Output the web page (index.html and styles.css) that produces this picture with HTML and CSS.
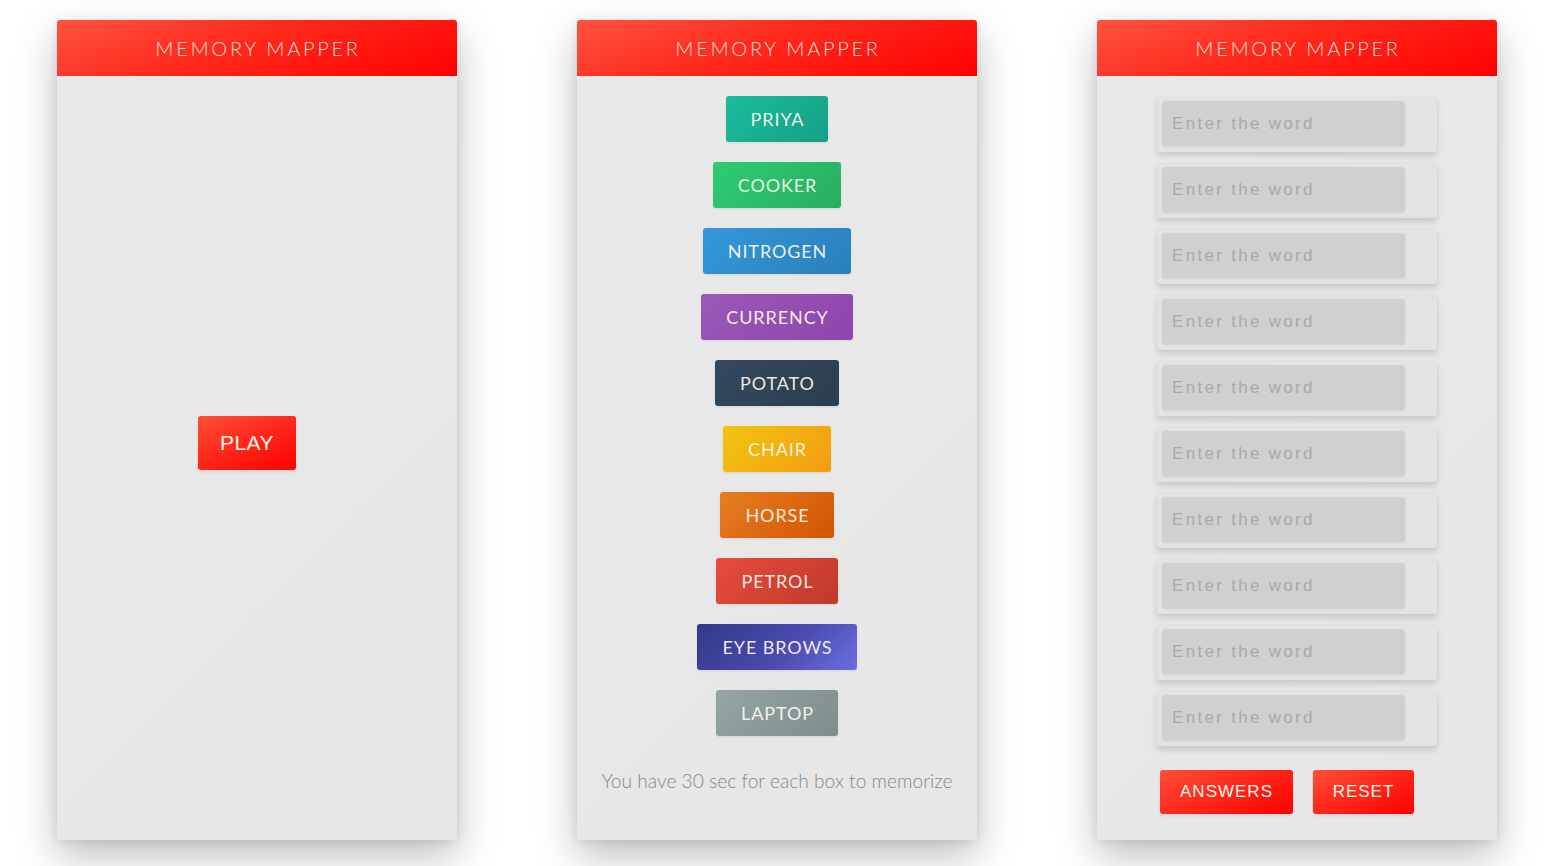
FILE: index.html
```html
<!DOCTYPE html>
<html lang="en">
<head>
<meta charset="utf-8">
<title>Memory Mapper</title>
<link rel="stylesheet" href="styles.css">
</head>
<body>
<main class="stage">
  <section class="panel">
    <header class="panel-head">MEMORY MAPPER</header>
    <div class="panel-body body-play">
      <button class="red-btn play-btn">PLAY</button>
    </div>
  </section>

  <section class="panel">
    <header class="panel-head">MEMORY MAPPER</header>
    <div class="panel-body body-words">
      <div class="word w-teal">PRIYA</div>
      <div class="word w-green">COOKER</div>
      <div class="word w-blue">NITROGEN</div>
      <div class="word w-purple">CURRENCY</div>
      <div class="word w-navy">POTATO</div>
      <div class="word w-yellow">CHAIR</div>
      <div class="word w-orange">HORSE</div>
      <div class="word w-red">PETROL</div>
      <div class="word w-indigo">EYE BROWS</div>
      <div class="word w-gray">LAPTOP</div>
      <p class="hint">You have 30 sec for each box to memorize</p>
    </div>
  </section>

  <section class="panel">
    <header class="panel-head">MEMORY MAPPER</header>
    <div class="panel-body body-inputs">
      <div class="inputs">
        <div class="field"><input type="text" placeholder="Enter the word"></div>
        <div class="field"><input type="text" placeholder="Enter the word"></div>
        <div class="field"><input type="text" placeholder="Enter the word"></div>
        <div class="field"><input type="text" placeholder="Enter the word"></div>
        <div class="field"><input type="text" placeholder="Enter the word"></div>
        <div class="field"><input type="text" placeholder="Enter the word"></div>
        <div class="field"><input type="text" placeholder="Enter the word"></div>
        <div class="field"><input type="text" placeholder="Enter the word"></div>
        <div class="field"><input type="text" placeholder="Enter the word"></div>
        <div class="field"><input type="text" placeholder="Enter the word"></div>
        <div class="actions">
          <button class="red-btn small-btn answers-btn">ANSWERS</button>
          <button class="red-btn small-btn reset-btn">RESET</button>
        </div>
      </div>
    </div>
  </section>
</main>
</body>
</html>
```

FILE: styles.css
```css
* { box-sizing: border-box; }

html, body {
  margin: 0;
  padding: 0;
  background: #ffffff;
  font-family: "Lato", "Liberation Sans", Arial, sans-serif;
}

.stage {
  display: flex;
  justify-content: center;
  gap: 120px;
  padding-top: 20px;
  height: 866px;
  padding-right: 2px;
}

.panel {
  width: 400px;
  height: 820px;
  display: flex;
  flex-direction: column;
  background: #e8e8e8;
  border-radius: 3px 3px 0 0;
  box-shadow: 0 16px 40px rgba(0, 0, 0, 0.26), 0 2px 8px rgba(0, 0, 0, 0.08);
}

.panel-head {
  height: 56px;
  flex: none;
  display: flex;
  align-items: center;
  justify-content: center;
  background: linear-gradient(160deg, #ff5340 0%, #ff2a1c 45%, #ff0000 100%);
  border-radius: 3px 3px 0 0;
  color: rgba(255, 244, 238, 0.92);
  font-family: "Lato", sans-serif;
  font-weight: 300;
  font-size: 20px;
  letter-spacing: 2.7px;
  padding-left: 2px;
}

.panel-body {
  flex: 1;
  display: flex;
  flex-direction: column;
  align-items: center;
  background: linear-gradient(135deg, #e9e9e9 0%, #e6e6e6 100%);
}

.body-play {
  justify-content: center;
  padding-bottom: 30px;
}

.red-btn {
  border: none;
  border-radius: 3px;
  background: linear-gradient(155deg, #ff5038 0%, #ff2a1c 45%, #ff0000 100%);
  color: #fff6ec;
  font-family: "Liberation Sans", Arial, sans-serif;
  cursor: pointer;
  box-shadow: 0 2px 3px rgba(0, 0, 0, 0.08);
}

.play-btn {
  width: 98px;
  height: 54px;
  font-size: 21px;
  letter-spacing: 0.5px;
  margin-right: 20px;
}

.body-words {
  padding-top: 20px;
}

.word {
  height: 46px;
  padding: 0 24px 0 25px;
  margin-bottom: 20px;
  display: flex;
  align-items: center;
  justify-content: center;
  border-radius: 3px;
  font-family: "Lato", sans-serif;
  font-size: 18px;
  letter-spacing: 0.9px;
  color: rgba(255, 250, 240, 0.93);
  box-shadow: 0 1px 2px rgba(0, 0, 0, 0.08);
}

.w-teal   { background: linear-gradient(135deg, #1abc9c, #16a085); }
.w-green  { background: linear-gradient(135deg, #2ecc71, #27ae60); }
.w-blue   { background: linear-gradient(135deg, #3498db, #2980b9); }
.w-purple { background: linear-gradient(135deg, #9b59b6, #8e44ad); }
.w-navy   { background: linear-gradient(135deg, #34495e, #2c3e50); }
.w-yellow { background: linear-gradient(135deg, #f1c40f, #f39c12); }
.w-orange { background: linear-gradient(135deg, #e67e22, #d35400); }
.w-red    { background: linear-gradient(135deg, #e74c3c, #c0392b); }
.w-indigo { background: linear-gradient(135deg, #323a86, #4a4ab0 55%, #6a6fe0); }
.w-gray   { background: linear-gradient(135deg, #95a5a6, #7f8c8d); }

.hint {
  margin: 13px 0 0;
  font-family: "Lato", sans-serif;
  font-weight: 300;
  font-size: 19.2px;
  color: #888888;
}

.body-inputs {
  padding-top: 21px;
}

.inputs {
  width: 280px;
  display: flex;
  flex-direction: column;
}

.field {
  width: 280px;
  height: 55px;
  padding: 4px 32px 6px 5px;
  margin-bottom: 11px;
  background: #e3e3e3;
  border-radius: 3px;
  box-shadow: 0 4px 6px rgba(0, 0, 0, 0.13), 0 0 2px rgba(0, 0, 0, 0.07);
}

.field input {
  width: 243px;
  height: 45px;
  border: none;
  outline: none;
  border-radius: 3px;
  background: #d0d0d0;
  padding: 0 0 0 10px;
  font-family: "Liberation Sans", Arial, sans-serif;
  font-size: 17px;
  letter-spacing: 2.3px;
  color: #777;
  box-shadow: 0 1px 2px rgba(0, 0, 0, 0.08);
}

.field input::placeholder {
  color: #a9a9a9;
}

.actions {
  display: flex;
  gap: 20px;
  padding-left: 3px;
  margin-top: 13px;
}

.small-btn {
  height: 44px;
  font-size: 17px;
  letter-spacing: 1px;
}

.answers-btn { width: 133px; }
.reset-btn { width: 101px; }
```
